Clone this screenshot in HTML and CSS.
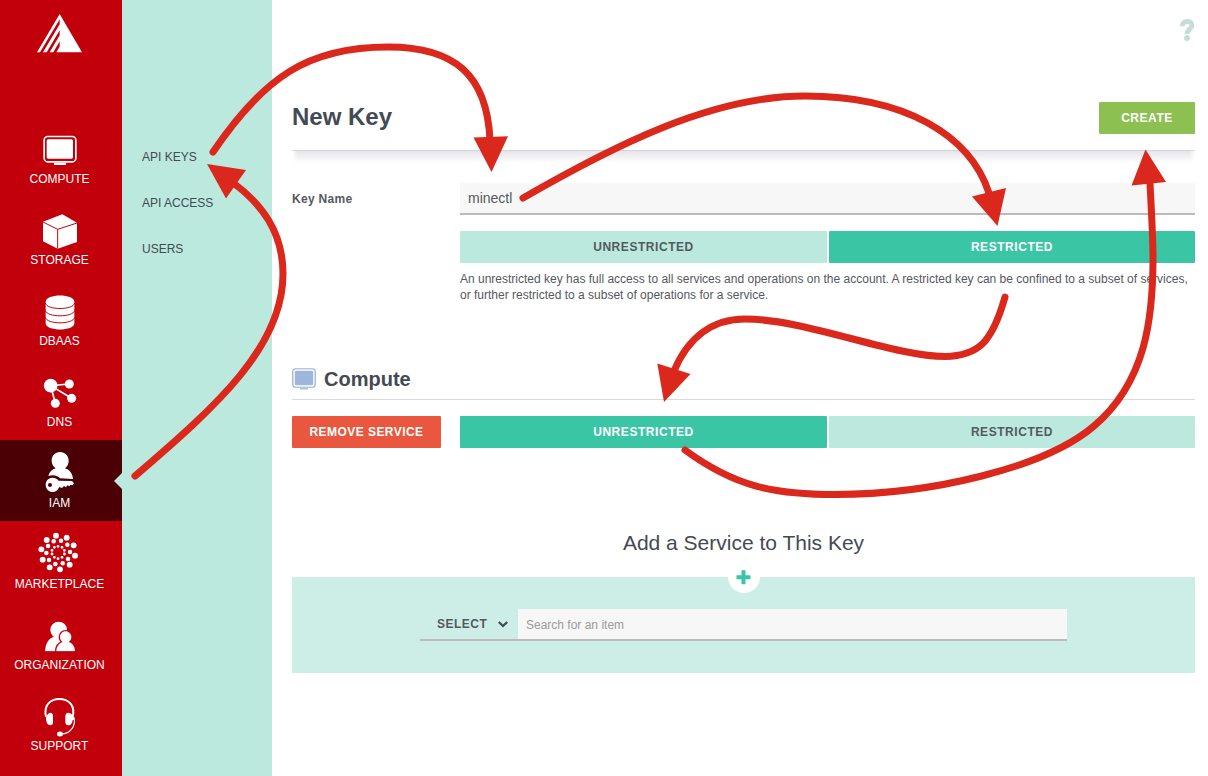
FILE: index.html
```html
<!DOCTYPE html>
<html lang="en">
<head>
<meta charset="utf-8">
<title>New Key</title>
<link rel="stylesheet" href="styles.css">
</head>
<body>
<div class="app">
  <nav class="sidebar">
    <a class="logo">
      <svg class="logo-mark" viewBox="108 40 141 121">
        <path d="M179 43L246 158H169L179 141ZM179 43V59L120 158H111ZM179 74V92L140 158H129ZM179 107V125L160 158H149Z"/>
      </svg>
    </a>
    <a class="nav-item">
      <svg class="nav-icon" viewBox="87 348 183 156">
        <rect x="132.5" y="409.5" width="95" height="76" rx="11" fill="none" stroke="#fff" stroke-width="5"/>
        <rect x="140" y="418" width="79" height="58" rx="5"/>
        <path d="M162 489H198V495H162Z"/>
      </svg>
      <span>COMPUTE</span>
    </a>
    <a class="nav-item">
      <svg class="nav-icon" viewBox="87 -9 183 156">
        <path d="M187 43L231 68V126L173 146L129 124V65Z"/>
        <path class="cut" d="M129 66L173 88L231 69M173 88V146"/>
      </svg>
      <span>STORAGE</span>
    </a>
    <a class="nav-item">
      <svg class="nav-icon" viewBox="87 234 183 156">
        <path d="M137 305C137 280 223 280 223 305V370C223 395 137 395 137 370Z"/>
        <path class="cut" d="M136 309C140 331 220 331 224 309M136 331C140 353 220 353 224 331M136 352C140 374 220 374 224 352"/>
      </svg>
      <span>DBAAS</span>
    </a>
    <a class="nav-item">
      <svg class="nav-icon" viewBox="87 -3 183 156">
        <path d="M208 72L152 77L215 115M152 77L166 130" fill="none" stroke="#fff" stroke-width="5"/>
        <circle cx="152" cy="77" r="20.5"/><circle cx="208" cy="72" r="13.5"/><circle cx="215" cy="115" r="13.5"/><circle cx="166" cy="130" r="13.5"/>
      </svg>
      <span>DNS</span>
    </a>
    <a class="nav-item active">
      <svg class="nav-icon" viewBox="87 240 183 156">
        <path d="M180 276C195 276 206 287 206 302C206 312 202 319 195 325C210 329 218 342 219 357L180 355C174 348 162 343 145 348C148 336 156 328 167 325C159 319 155 312 155 302C155 287 165 276 180 276Z"/>
        <path fill-rule="evenodd" d="M158 353C166 353 172 357 176 362L216 363L222 370L217 376L212 374L208 379L202 376L198 382L192 378L186 384L178 381C173 391 167 396 158 396C146 396 137 386 137 374C137 362 146 353 158 353ZM150 369A6 6 0 1 0 150 381A6 6 0 1 0 150 369Z"/>
      </svg>
      <span>IAM</span>
    </a>
    <a class="nav-item">
      <svg class="nav-icon" viewBox="87 3 183 156">
        <g fill="none" stroke="#fff" stroke-linecap="round">
          <path stroke-width="17.5" d="M168 47h.1M200 53h.1M221 76h.1M225 107h.1M209 134h.1M180 148h.1M149 142h.1M128 119h.1M124 88h.1M140 60h.1"/>
          <path stroke-width="13.5" d="M161 64h.1M183 62h.1M202 74h.1M210 96h.1M204 117h.1M188 130h.1M166 132h.1M147 120h.1M139 99h.1M144 78h.1"/>
          <path stroke-width="8.5" d="M174 79h.1M186 82h.1M193 91h.1M193 102h.1M186 112h.1M174 116h.1M163 112h.1M156 102h.1M156 91h.1M163 82h.1"/>
        </g>
      </svg>
      <span>MARKETPLACE</span>
    </a>
    <a class="nav-item">
      <svg class="nav-icon" viewBox="87 246 183 156">
        <circle cx="176" cy="330" r="25"/>
        <path d="M135 394C136 372 145 356 161 350H192L200 394Z"/>
        <path d="M197 334C206 334 214 342 214 351C214 358 211 363 206 366C218 370 225 380 225 394H169C169 380 177 370 188 366C183 363 180 358 180 351C180 342 187 334 197 334Z" stroke="#c2000b" stroke-width="8" paint-order="stroke"/>
        <path d="M130 394.500H230V402H130Z" fill="#c2000b"/>
      </svg>
      <span>ORGANIZATION</span>
    </a>
    <a class="nav-item">
      <svg class="nav-icon" viewBox="87 489 183 156">
        <g fill="none" stroke="#fff">
          <path stroke-width="6" d="M138 590C130 555 152 537 178 537C204 537 227 555 218 590"/>
          <path stroke-width="3.500" d="M222 592C228 618 211 641 184 642"/>
        </g>
        <path d="M151 578C157 578 159 583 159 589V606C159 612 157 616 151 616C143 616 139 607 138 598C138 588 143 579 151 578ZM205 578C199 578 196 583 196 589V606C196 612 199 616 205 616C213 616 217 609 218 600L223 599L221 590C217 583 213 579 205 578Z"/>
        <ellipse cx="180" cy="642" rx="9" ry="7.500"/>
      </svg>
      <span>SUPPORT</span>
    </a>
  </nav>

  <aside class="subnav">
    <a>API KEYS</a>
    <a>API ACCESS</a>
    <a>USERS</a>
  </aside>

  <main class="main">
    <div class="help">
      <svg class="help-icon" viewBox="0 0 16 24">
        <path d="M3.300 8.200C3.300 1.800 13 1.900 13 7.200C13 11 8 11 8 16" fill="none" stroke="#c5ddd6" stroke-width="4.800"/>
        <circle cx="8" cy="20" r="2.900" fill="#c5ddd6"/>
      </svg>
    </div>
    <header class="page-head">
      <h1>New Key</h1>
      <button class="btn create">CREATE</button>
    </header>
    <div class="head-shadow"></div>

    <section class="form-row">
      <label>Key Name</label>
      <div class="field">
        <div class="input">minectl</div>
        <div class="toggle">
          <button class="btn">UNRESTRICTED</button>
          <button class="btn selected">RESTRICTED</button>
        </div>
        <p class="hint">An unrestricted key has full access to all services and operations on the account. A restricted key can be confined to a subset of services, or further restricted to a subset of operations for a service.</p>
      </div>
    </section>

    <section class="service">
      <h2>
        <svg class="service-icon" viewBox="0 0 24 23">
          <rect x=".75" y=".75" width="22.500" height="18.500" rx="2.500" fill="#eef3fb" stroke="#9db6da" stroke-width="1.200"/>
          <rect x="3" y="3" width="18" height="14" rx="1" fill="#9db6da"/>
          <path d="M8 20.200H16V21.500H8Z" fill="#9db6da"/>
        </svg>
        Compute
      </h2>
      <div class="service-row">
        <button class="btn remove">REMOVE SERVICE</button>
        <div class="toggle">
          <button class="btn selected">UNRESTRICTED</button>
          <button class="btn">RESTRICTED</button>
        </div>
      </div>
    </section>

    <section class="add">
      <h3>Add a Service to This Key</h3>
      <div class="add-panel">
        <span class="plus"><svg viewBox="0 0 32 32"><path d="M13.500 9.200h4v5h5v4h-5v5h-4v-5h-5v-4h5z" fill="#3ac6a4"/></svg></span>
        <div class="search">
          <div class="select">SELECT
            <svg class="chevron" viewBox="0 0 12 8"><path d="M1.800 2L6 6L10.200 2" fill="none" stroke="#434a54" stroke-width="2.300"/></svg>
          </div>
          <div class="placeholder">Search for an item</div>
        </div>
      </div>
    </section>
  </main>
</div>

<svg class="arrows" viewBox="0 0 1208 776">
  <g class="shafts">
    <path d="M213 152C264 77 308 47 388 47C455 47 487 75 490 140"/>
    <path d="M135 476C218 405 283 346 283 274C283 232 262 204 232 182"/>
    <path d="M523 198C610 148 710 96 805 96C905 96 970 135 989 193"/>
    <path d="M1005 297C992 343 978 356 945 356.500C893 356.500 805 319 745 319C712 319 688 338 674 371"/>
    <path d="M685 450C735 487 775 494.500 835 494.500C930 494.500 1045 468 1094 426C1146 382 1153 318 1153 258C1153 235 1151 205 1150 183"/>
  </g>
  <path class="heads" d="M473.500 137.500L508 136.300L491.500 172ZM207 164L246 170L226 198.500ZM997.500 226L972 196.500L1006 188ZM664 402L657.300 363.500L690.500 374ZM1145.500 149.500L1131.500 185.500L1166 182Z"/>
</svg>
</body>
</html>
```
FILE: styles.css
```css
* { box-sizing: border-box; }
body {
  margin: 0;
  position: relative;
  width: 1208px;
  height: 776px;
  overflow: hidden;
  background: #fff;
  color: #55595f;
  font: 12px/16px "Liberation Sans", Arial, sans-serif;
}
h1, h2, h3, p { margin: 0; }
.app { display: flex; height: 776px; }

.sidebar { flex: 0 0 122px; background: #c2000b; }
.logo { display: flex; height: 116px; padding: 13px 0 0 36px; }
.logo-mark { width: 47px; height: 40.33px; fill: #fff; }
.nav-item {
  position: relative;
  display: flex;
  flex-direction: column;
  align-items: center;
  height: 81px;
  padding-right: 3px;
  color: #fff;
}
.nav-item.active { background: #4b0006; }
.nav-item.active::after {
  content: "";
  position: absolute;
  right: 0;
  top: 33px;
  border: 8px solid transparent;
  border-left-width: 0;
  border-right-color: #bbe9de;
}
.nav-icon { display: block; width: 61px; height: 52px; flex: none; fill: #fff; overflow: visible; }
.nav-icon .cut { fill: none; stroke: #c2000b; stroke-width: 3; }
.nav-item span { margin-top: 3px; line-height: 16px; }

.subnav {
  flex: 0 0 150px;
  display: flex;
  flex-direction: column;
  gap: 30px;
  padding: 149px 0 0 20px;
  background: #bbe9de;
  color: #434a54;
}

.main { flex: 1; padding: 0 13px 0 20px; }
.help { display: flex; justify-content: flex-end; height: 102px; padding-top: 18px; }
.help-icon { width: 16px; height: 24px; }
.page-head {
  display: flex;
  justify-content: space-between;
  align-items: flex-start;
  height: 49px;
  border-bottom: 1px solid #d3d5d9;
}
h1 { font-size: 24px; line-height: 30px; color: #434a54; }
.btn {
  height: 32px;
  padding: 0;
  border: 0;
  border-radius: 1px;
  background: #bbe9de;
  color: #55595f;
  font: bold 12px/32px "Liberation Sans", Arial, sans-serif;
  letter-spacing: .55px;
  text-align: center;
}
.btn.create { width: 96px; background: #8cc152; color: #fff; }
.btn.selected { background: #3ac6a4; color: #fff; }
.btn.remove { width: 149px; background: #e9573e; color: #fff; letter-spacing: .45px; }
.head-shadow {
  height: 32px;
  background:
    linear-gradient(90deg, #fff, transparent 6px, transparent calc(100% - 6px), #fff),
    linear-gradient(#e4e4eb, #fff 12px);
}

.form-row { display: grid; grid-template-columns: 168px 1fr; height: 180px; }
.form-row label { padding-top: 8px; font-weight: bold; letter-spacing: .3px; }
.input {
  height: 32px;
  padding-left: 8px;
  border-bottom: 2px solid #bbb;
  background: #f7f7f7;
  font-size: 14px;
  line-height: 31px;
}
.toggle { display: grid; grid-template-columns: 367px 366px; gap: 2px; }
.field .toggle { margin-top: 16px; }
.hint { margin-top: 8px; }

.service { height: 164px; }
h2 {
  display: flex;
  align-items: center;
  gap: 8px;
  height: 37px;
  padding-bottom: 5px;
  border-bottom: 1px solid #d8dade;
  color: #434a54;
  font-size: 20px;
  line-height: 24px;
}
.service-icon { width: 24px; height: 23px; margin-top: 2px; }
.service-row { display: grid; grid-template-columns: 168px 1fr; margin-top: 16px; }

h3 {
  height: 50px;
  color: #434a54;
  font-size: 21px;
  font-weight: normal;
  line-height: 32px;
  text-align: center;
}
.add-panel {
  position: relative;
  display: flex;
  justify-content: center;
  height: 96px;
  padding-top: 32px;
  background: #cdeee6;
}
.plus {
  position: absolute;
  left: 436px;
  top: -16px;
  width: 32px;
  height: 32px;
  border-radius: 50%;
  background: #fff;
}
.plus svg { display: block; }
.search { display: flex; width: 647px; height: 32px; border-bottom: 2px solid #bbb; }
.select {
  display: flex;
  align-items: center;
  gap: 10px;
  width: 98px;
  padding-left: 17px;
  color: #55595f;
  font-weight: bold;
  letter-spacing: .5px;
}
.chevron { width: 12px; height: 8px; }
.placeholder { flex: 1; padding-left: 8px; background: #f7f7f7; color: #9b9b9b; line-height: 32px; }

.arrows { position: absolute; left: 0; top: 0; width: 1208px; height: 776px; pointer-events: none; }
.shafts { fill: none; stroke: #da291c; stroke-width: 7; stroke-linecap: round; }
.heads { fill: #da291c; }
```
